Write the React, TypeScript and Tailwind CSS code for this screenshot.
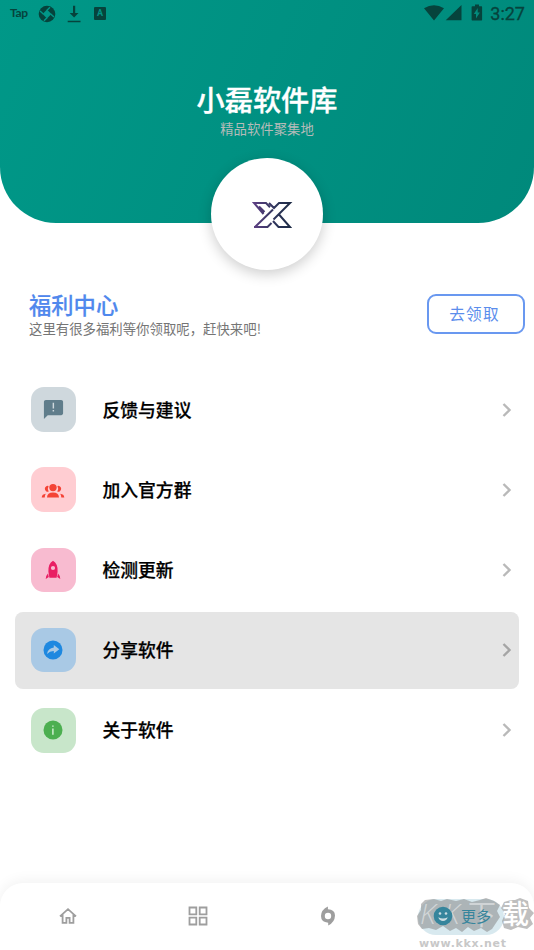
import React from "react";

const cjk = "font-['Noto_Sans_CJK_SC',sans-serif]";

function StatusBar() {
  return (
    <div className="flex h-[27px] shrink-0 items-center justify-between pl-[10px] pr-[9px] text-[#06433c]">
      <div className="flex items-center">
        <span className="w-[28px] font-['Lato',sans-serif] text-[12px] leading-[14px] font-bold tracking-[-0.3px] -translate-y-px">Tap</span>
        <svg className="h-[18px] w-[18px]" viewBox="0 0 18 18">
          <circle cx="9" cy="9" r="8.3" fill="currentColor" />
          <path d="M9 4.6 13.4 9 9 13.4 4.6 9Z" fill="#019687" />
          <path d="M9 5.3 12 2.2M12.7 9 16 12M9 12.7 6 15.8M5.3 9 2 6" stroke="#019687" strokeWidth="1.4" />
        </svg>
        <svg className="ml-[11px] h-[18px] w-[14px]" viewBox="0 0 14 18" fill="currentColor">
          <path d="M6 .7h2.2V8h3.3L7.1 12.5 2.7 8H6ZM.7 15.8h12.8v1.5H.7Z" />
        </svg>
        <span className="ml-[13px] flex h-[13px] w-[12px] items-center justify-center rounded-[1px] bg-[#06433c] font-['Roboto',sans-serif] text-[9px] font-bold text-[#039385]">A</span>
      </div>
      <div className="flex items-center">
        <svg className="-mt-px h-[18px] w-[59px] overflow-visible" viewBox="0 0 59 18" fill="currentColor">
          <path d="M-1 4.3Q9 -1.6 19 4.3L9 16.4ZM36.5 .9V16.3H20.7ZM47.5 2.2h2.5V.4h4v1.8H56.5q.6 0 .6.7v12.8q0 .7-.6.7h-9.2q-.7 0-.7-.7V2.9q0-.7.9-.7Z" />
          <path d="m52.7 4-3.9 6h2.2v4.6l3.9-6h-2.2Z" fill="#028a7c" />
        </svg>
        <span className="ml-[6px] font-['Roboto',sans-serif] text-[18px] leading-[20px] [-webkit-text-stroke:0.3px_#06433c]">3:27</span>
      </div>
    </div>
  );
}

function BrandMark() {
  return (
    <svg className="mt-[2px] ml-[10px] h-[28px] w-[42px]" viewBox="0 0 42 28" fill="none" stroke="url(#brand)" strokeWidth="2">
      <defs>
        <linearGradient id="brand" x1="0" x2="42" y1="0" y2="0" gradientUnits="userSpaceOnUse">
          <stop stopColor="#634188" />
          <stop offset=".6" stopColor="#2c3459" />
          <stop offset="1" stopColor="#1b2942" />
        </linearGradient>
      </defs>
      <path d="M12.5 13 3 2H15L19 6.2M8 5.5 13.5 11M4 26 22 8.5M3 26H16.5L20.5 22M18 2 23 7 28 2H39L22.5 18.5M28 13.5 39 26H27.5L22 20" />
    </svg>
  );
}

function FeedbackIcon() {
  return <svg viewBox="0 0 24 24" className="size-[23px]" fill="#607d8b"><path d="M20 2H4C2.9 2 2 2.9 2 4v18l4-4h14c1.1 0 2-.9 2-2V4c0-1.1-.9-2-2-2Zm-7.4 12h-1.5v-1.5h1.5Zm0-3h-1.5V5h1.5Z" /></svg>;
}

function GroupIcon() {
  return <svg viewBox="0 0 24 16" className="mt-[2px] h-[16px] w-[24px]" fill="#f44336"><circle cx="12" cy="4.6" r="3.7" /><path d="M7.6 3A2.9 2.9 0 1 0 7.7 8.5Q6 5.8 7.6 3ZM16.4 3A2.9 2.9 0 1 1 16.3 8.5Q18 5.8 16.4 3ZM6 14.4Q6.2 9.4 12 9.4T18 14.4ZM.7 14.4Q.9 11.2 4.8 10.8 3.8 12.4 3.7 14.4ZM23.3 14.4Q23.1 11.2 19.2 10.8 20.2 12.4 20.3 14.4Z" /></svg>;
}

function RocketIcon() {
  return <svg viewBox="0 0 16 20" className="h-[20px] w-[16px]" fill="#e91e63"><path fillRule="evenodd" d="M8 .8Q3 3.5 3.4 11.8L4.4 17.8h7.2l1-6Q13 3.5 8 .8Zm0 5.1a2.1 2.1 0 1 1 0 4.2 2.1 2.1 0 0 1 0-4.2ZM3 13.5 3.8 17 .7 19q.1-3.5 2.3-5.5ZM13 13.5 12.2 17l3.1 2q-.1-3.5-2.3-5.5Z" /></svg>;
}

function ShareIcon() {
  return <svg viewBox="0 0 20 20" className="size-[20px]"><circle cx="10" cy="10" r="9.5" fill="#1e88e0" /><path d="M10.8 5 16.3 9.3 10.8 13.5v-2.4q-4-.1-6.8 2.9Q5 8.2 10.8 7.6Z" fill="#a9c9e5" /></svg>;
}

function InfoIcon() {
  return <svg viewBox="0 0 20 20" className="size-[20px]"><circle cx="10" cy="10" r="9.5" fill="#4caf50" /><path d="M9.2 5.4h1.4v1.3H9.2ZM9.2 8.5h1.4v6.2H9.2Z" fill="#d8f3d9" /></svg>;
}

const rows = [
  { label: "反馈与建议", tile: "bg-[#cfd8dd]", icon: <FeedbackIcon /> },
  { label: "加入官方群", tile: "bg-[#ffcdd2]", icon: <GroupIcon /> },
  { label: "检测更新", tile: "bg-[#f8bbd0]", icon: <RocketIcon /> },
  { label: "分享软件", tile: "bg-[#a9c9e5]", icon: <ShareIcon />, active: true },
  { label: "关于软件", tile: "bg-[#c8e6ca]", icon: <InfoIcon /> },
];

function Watermark() {
  return (
    <div className="absolute top-[13px] right-0 h-[55px] w-[118px]">
      <svg className="absolute inset-0 h-[55px] w-[118px]" viewBox="0 0 118 55">
        <path d="M5 8 9 4 18 3 25 5 31 3 40 5 48 3 56 6 64 4 70 2 78 5 84 9 81 15 84 21 80 27 76 33 71 36 65 32 58 35 52 31 46 36 40 32 34 35 27 30 20 34 13 32 6 33 2 28 1 20 5 14ZM88 6 95 4 99 4 104 2 112 5 113 12 118 17 114 22 117 28 111 33 102 31 95 34 88 32 86 25 89 18 85 12Z" fill="#858585" fillOpacity=".52" />
      </svg>
      <div className="absolute top-0 left-[4px] flex items-center text-[28px] leading-[34px] text-white/45">
        <span className="w-[24px] font-['Open_Sans',sans-serif] font-light italic">K</span>
        <span className="w-[24px] font-['Open_Sans',sans-serif] font-light italic">K</span>
        <span className="w-[34px] text-[28px]">下</span>
        <span className="text-[27px] font-medium text-white">载</span>
      </div>
      <span className="absolute top-[41px] left-[3px] font-['DejaVu_Sans',sans-serif] text-[11px] leading-[14px] font-bold tracking-[0.65px] text-[#c8c8c8]">www.kkx.net</span>
    </div>
  );
}

export default function App() {
  return (
    <main className={`${cjk} flex h-[950px] w-[534px] flex-col overflow-hidden bg-white`}>
      <header className="flex h-[222.5px] shrink-0 flex-col rounded-b-[56px] bg-[linear-gradient(112.6deg,#009888,#00897b)]">
        <StatusBar />
        <h1 className="mt-[52px] shrink-0 text-center text-[28.2px] leading-[40px] font-medium text-white [-webkit-text-stroke:0.3px_white]">小磊软件库</h1>
        <p className="-mt-[1px] shrink-0 text-center text-[13.4px] leading-[20px] text-[#b5bbb9]">精品软件聚集地</p>
        <div className="mt-[19.5px] flex size-[112px] shrink-0 items-center justify-center self-center rounded-full bg-white shadow-[0_4px_14px_rgba(0,0,0,0.2)]">
          <BrandMark />
        </div>
      </header>

      <section className="mt-[66.5px] flex h-[50px] shrink-0 items-center justify-between pr-[9px] pl-[29px]">
        <div>
          <h2 className="text-[22.3px] leading-[29px] font-medium text-[#5088ed] [-webkit-text-stroke:0.2px_#5088ed]">福利中心</h2>
          <p className="-mt-px text-[13.4px] leading-[20px] text-[#757575]">这里有很多福利等你领取呢，赶快来吧!</p>
        </div>
        <button className="h-[40px] w-[98px] rounded-[9px] border-2 border-[#4f86ed]/85 pr-[3px] text-[15.7px] tracking-[1.2px] text-[#5b8dec]">去领取</button>
      </section>

      <nav className="mt-[32px] flex shrink-0 flex-col gap-[3.2px] px-[15px]">
        {rows.map((row) => (
          <a key={row.label} className={`flex h-[77px] items-center rounded-[8px] pr-[7px] pl-[16px] ${row.active ? "bg-[#e5e5e5]" : ""}`}>
            <span className={`flex size-[44.5px] items-center justify-center rounded-[13px] ${row.tile}`}>{row.icon}</span>
            <span className="-mt-[2px] ml-[27px] flex-1 text-[17.8px] leading-[28px] font-medium text-black [-webkit-text-stroke:0.25px_black]">{row.label}</span>
            <svg viewBox="0 0 10 14" className={`h-[14px] w-[10px] ${row.active ? "text-[#a5a5a5]" : "text-[#b9b9b9]"}`} fill="none" stroke="currentColor" strokeWidth="2.4">
              <path d="m1.5 1 6 6-6 6" />
            </svg>
          </a>
        ))}
      </nav>

      <footer className="relative mt-auto flex h-[67px] shrink-0 items-center rounded-t-[23px] bg-white pl-[59px] text-[#9e9e9e] shadow-[0_-2px_14px_rgba(0,0,0,0.06)]">
        <svg viewBox="0 0 18 18" className="-mt-px size-[18px]" fill="none" stroke="currentColor" strokeWidth="1.8"><path d="m1 9.4 8-7.2 8 7.2M3.6 7.5v8.3h3.8v-5h3.2v5h3.8V7.5" /></svg>
        <svg viewBox="0 0 20 20" className="-mt-px ml-[111px] size-[20px]" fill="none" stroke="currentColor" strokeWidth="1.8"><path d="M1.5 1.5h6.8v6.8H1.5ZM11.7 1.5h6.8v6.8h-6.8ZM1.5 11.7h6.8v6.8H1.5ZM11.7 11.7h6.8v6.8h-6.8Z" /></svg>
        <svg viewBox="0 0 16 20" className="-mt-px ml-[112px] h-[20px] w-[16px]" fill="currentColor"><path fillRule="evenodd" d="M7.9.4V3.2Q14.9 3.4 15 9.5 14.8 16.3 8.2 19.6V16.7Q1 16.2 1 10 1.1 3.6 7.9.4ZM8 6.8a3.2 3.2 0 1 0 0 6.4 3.2 3.2 0 0 0 0-6.4Z" /></svg>
        <div className="ml-[82px] flex h-[36px] w-[86px] items-center rounded-full bg-[#d8e9ef] pl-[15px] text-[#36859c]">
          <svg viewBox="0 0 20 20" className="relative z-10 -mt-px size-[20px]"><circle cx="10" cy="10" r="9.3" fill="currentColor" /><circle cx="7" cy="7.5" r="1.3" fill="#cbdde2" /><circle cx="13" cy="7.5" r="1.3" fill="#cbdde2" /><path d="M5.3 11.2Q10 14 14.7 11.2 13.5 15 10 15t-4.7-3.8Z" fill="#cbdde2" /></svg>
          <span className="relative z-10 -mt-px ml-[8px] text-[15px] leading-[22px] whitespace-nowrap">更多</span>
        </div>
        <Watermark />
      </footer>
    </main>
  );
}
